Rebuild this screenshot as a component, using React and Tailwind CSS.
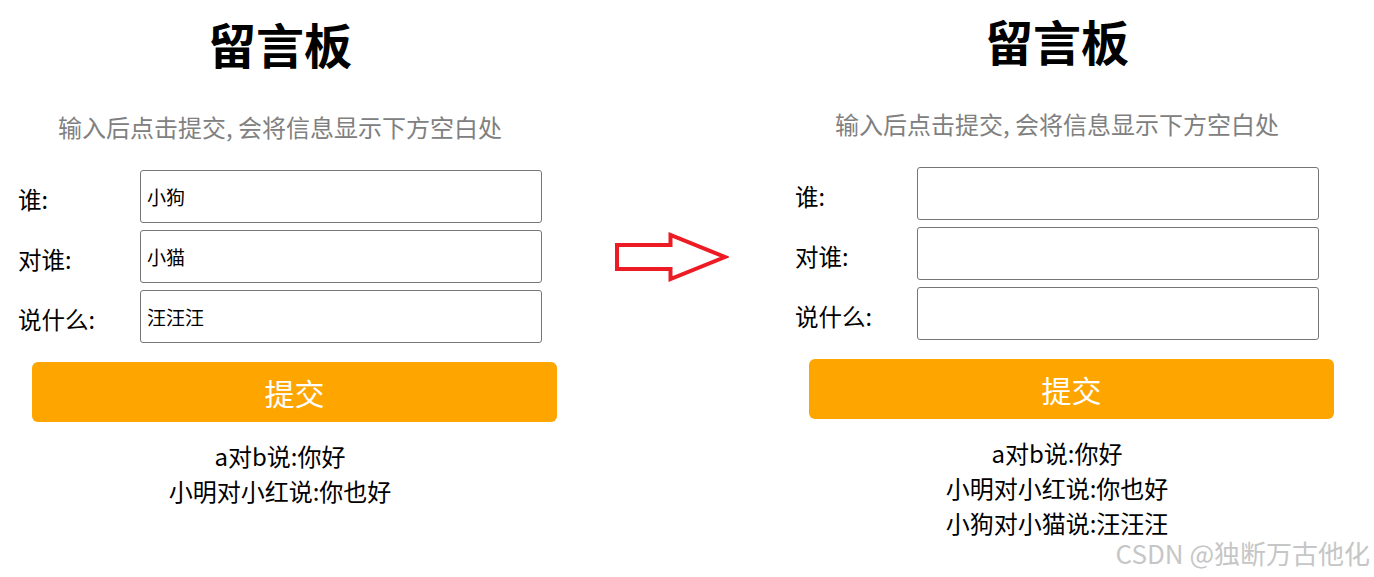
import React from 'react';

const font = { fontFamily: '"Noto Sans CJK SC", "Noto Sans", sans-serif' };

const fields = [
    { label: '谁:', key: 'from' },
    { label: '对谁:', key: 'to' },
    { label: '说什么:', key: 'say' },
];

const Board = ({ values, messages, top }) => {
    return (
        <div className={`w-[560px] shrink-0 flex flex-col ${top}`}>
            <h1 className="text-center text-[48px] leading-[48px] font-bold text-black">留言板</h1>
            <p className="mt-[48px] text-center text-[24px] leading-[24px] text-[#808080]">
                输入后点击提交, 会将信息显示下方空白处
            </p>

            <div className="mt-[31px] flex flex-col gap-[7px]">
                {fields.map((f) => (
                    <div key={f.key} className="flex items-center">
                        <label className="w-[140px] shrink-0 pl-[18px] pt-[5px] text-[23.5px] leading-[24px] text-black">{f.label}</label>
                        <input
                            type="text"
                            readOnly
                            value={values[f.key]}
                            className="w-[402px] h-[53px] px-[6px] border border-[#767676] rounded-[3px] text-[19px] text-black bg-white outline-none"
                            style={font}
                        />
                    </div>
                ))}
            </div>

            <div className="mt-[19px] pl-[32px]">
                <button className="w-[525px] h-[60px] rounded-[6px] bg-[#ffa500] text-white text-[30px] leading-[30px]" style={font}>
                    提交
                </button>
            </div>

            <div className="mt-[16px] flex flex-col items-center">
                {messages.map((m, i) => (
                    <div key={i} className="text-[24px] leading-[35px] text-black">{m}</div>
                ))}
            </div>
        </div>
    );
};

export default function App() {
    return (
        <div className="relative w-[1374px] h-[577px] bg-white overflow-hidden flex" style={font}>
            <Board
                top="pt-[19px]"
                values={{ from: '小狗', to: '小猫', say: '汪汪汪' }}
                messages={['a对b说:你好', '小明对小红说:你也好']}
            />

            {/* arrow between the two states */}
            <div className="w-[217px] shrink-0 pt-[231px] pl-[53px]">
                <svg width="116" height="52" viewBox="613 231 116 52">
                    <polygon
                        points="617,245 670.5,245 670.5,235 725,257 670.5,279 670.5,269 617,269"
                        fill="none"
                        stroke="#ed1c24"
                        strokeWidth="4"
                    />
                </svg>
            </div>

            <Board
                top="pt-[16px]"
                values={{ from: '', to: '', say: '' }}
                messages={['a对b说:你好', '小明对小红说:你也好', '小狗对小猫说:汪汪汪']}
            />

            <div className="absolute right-[4px] bottom-[11px] text-[26px] leading-[26px] text-[#c6c6c6]">
                CSDN @独断万古他化
            </div>
        </div>
    );
}
